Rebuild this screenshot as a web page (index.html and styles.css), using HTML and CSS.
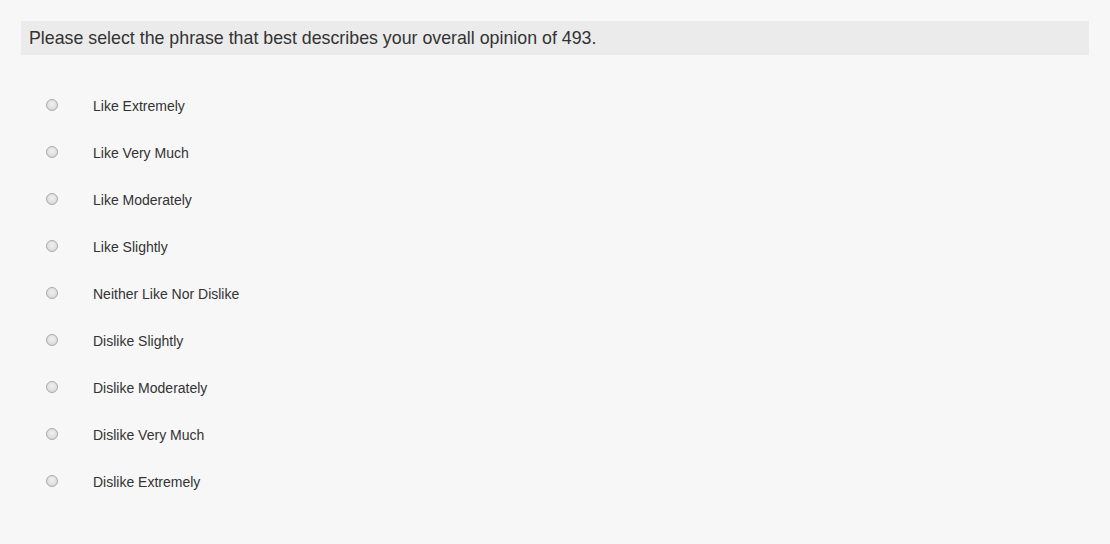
FILE: index.html
```html
<!DOCTYPE html>
<html>
<head>
<meta charset="utf-8">
<link rel="stylesheet" href="styles.css">
</head>
<body>
<div class="question">
  <div class="question-text">Please select the phrase that best describes your overall opinion of 493.</div>
  <div class="choices">
    <label class="choice"><input type="radio" name="q" class="radio"><span class="label">Like Extremely</span></label>
    <label class="choice"><input type="radio" name="q" class="radio"><span class="label">Like Very Much</span></label>
    <label class="choice"><input type="radio" name="q" class="radio"><span class="label">Like Moderately</span></label>
    <label class="choice"><input type="radio" name="q" class="radio"><span class="label">Like Slightly</span></label>
    <label class="choice"><input type="radio" name="q" class="radio"><span class="label">Neither Like Nor Dislike</span></label>
    <label class="choice"><input type="radio" name="q" class="radio"><span class="label">Dislike Slightly</span></label>
    <label class="choice"><input type="radio" name="q" class="radio"><span class="label">Dislike Moderately</span></label>
    <label class="choice"><input type="radio" name="q" class="radio"><span class="label">Dislike Very Much</span></label>
    <label class="choice"><input type="radio" name="q" class="radio"><span class="label">Dislike Extremely</span></label>
  </div>
</div>
</body>
</html>
```
FILE: styles.css
```css
html, body {
  margin: 0;
  padding: 0;
  background: #f7f7f7;
  font-family: "Liberation Sans", Arial, sans-serif;
  color: #333;
}
.question {
  padding: 21px 21px 0 21px;
}
.question-text {
  background: #ebebeb;
  height: 34px;
  line-height: 34px;
  padding-left: 8px;
  font-size: 17.8px;
  color: #333;
}
.choices {
  display: flex;
  flex-direction: column;
  padding-top: 27px;
}
.choice {
  display: flex;
  align-items: center;
  height: 47px;
  padding-left: 25px;
}
.radio {
  appearance: none;
  -webkit-appearance: none;
  margin: -1px 0 0 0;
  width: 12px;
  height: 12px;
  border-radius: 50%;
  border: 1px solid #a9a9a9;
  background: radial-gradient(circle at 50% 40%, #f0f0f0 0%, #dcdcdc 70%, #d0d0d0 100%);
  flex-shrink: 0;
}
.label {
  margin-left: 35px;
  font-size: 14px;
  color: #333;
}
```
